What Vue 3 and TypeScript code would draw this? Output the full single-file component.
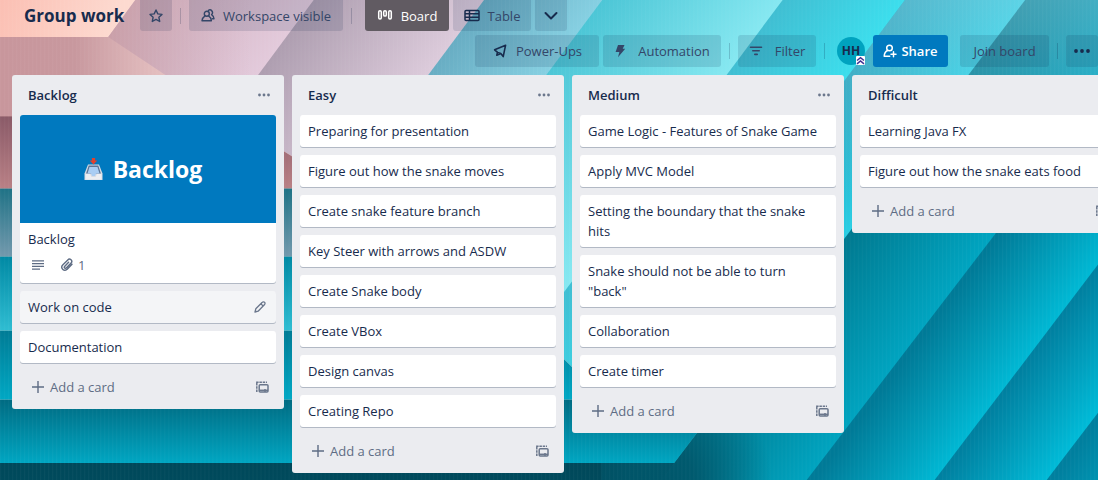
<script setup lang="ts">
interface Card {
  title: string
  cover?: string
  attachments?: number
  hovered?: boolean
}

interface List {
  name: string
  cards: Card[]
}

interface Fold {
  corner: [number, number]
  top: number
  flat: [string, string]
  slant: [string, string]
  wide?: boolean
}

const plain = (...titles: string[]): Card[] => titles.map((title) => ({ title }))

const lists: List[] = [
  {
    name: 'Backlog',
    cards: [
      { title: 'Backlog', cover: 'Backlog', attachments: 1 },
      { title: 'Work on code', hovered: true },
      { title: 'Documentation' },
    ],
  },
  {
    name: 'Easy',
    cards: plain(
      'Preparing for presentation',
      'Figure out how the snake moves',
      'Create snake feature branch',
      'Key Steer with arrows and ASDW',
      'Create Snake body',
      'Create VBox',
      'Design canvas',
      'Creating Repo',
    ),
  },
  {
    name: 'Medium',
    cards: plain(
      'Game Logic - Features of Snake Game',
      'Apply MVC Model',
      'Setting the boundary that the snake hits',
      'Snake should not be able to turn "back"',
      'Collaboration',
      'Create timer',
    ),
  },
  {
    name: 'Difficult',
    cards: plain('Learning Java FX', 'Figure out how the snake eats food'),
  },
]

// Sheets of folded paper: each runs flat from the left edge to its corner, then slants up to the top.
// The flat part of a wide sheet reaches all the way to the edge of the next sheet.
const folds: Fold[] = [
  { corner: [108, 37], top: 135, flat: ['#c4929a', '#d9a5a3'], slant: ['#ccaab8', '#e3cadb'] },
  { corner: [227, 116], top: 313, flat: ['#8a5a68', '#b98085'], slant: ['#ae9eb0', '#dccbdb'] },
  { corner: [343, 188], top: 483, flat: ['#1f7286', '#7399ad'], slant: ['#68adc3', '#86d0e2'] },
  { corner: [410, 256], top: 601, flat: ['#0089a4', '#2fbdd2'], slant: ['#4cc6d6', '#86e8f1'] },
  { corner: [534, 330], top: 781, flat: ['#007b95', '#00a8c4'], slant: ['#40bed2', '#3cdeed'] },
  { corner: [604, 399], top: 903, flat: ['#006b82', '#00a6c2'], slant: ['#1f9fba', '#2acfe4'], wide: true },
  { corner: [673, 462], top: 1023, flat: ['#00485a', '#005f70'], slant: ['#007990', '#00a6c2'] },
  { corner: [674, 650], top: 1172, flat: ['#006c82', '#006c82'], slant: ['#007a97', '#00bad6'] },
  { corner: [803, 650], top: 1296, flat: ['#006c82', '#006c82'], slant: ['#0080a0', '#00bedb'] },
  { corner: [914, 650], top: 1410, flat: ['#006c82', '#006c82'], slant: ['#007f9e', '#00b4d0'] },
]

const sheets = folds.map((fold, i) => {
  const next = folds[i + 1] ?? { corner: [1000, 760], top: 1530 }
  const [x, y] = fold.corner
  const width = next.top - fold.top
  // A flat part that leaves the picture keeps the line of its own slant.
  const innerX = next.corner[1] > 480 ? x - (next.corner[1] - y) * 0.75 : next.corner[0]
  const outerX = fold.wide ? next.corner[0] + (next.corner[1] - y) * 0.75 : x
  return {
    ...fold,
    id: i,
    y1: y,
    y2: next.corner[1],
    x2: fold.top + width * 0.64,
    d2: width * 0.48,
    flatPoints: `0,${y} ${outerX},${y} ${innerX},${next.corner[1]} 0,${next.corner[1]}`,
    slantPoints: `${x},${y} ${fold.top},0 1700,0 1700,760 ${innerX},${next.corner[1]}`,
  }
})
</script>

<template>
  <div class="page">
    <svg class="wallpaper" viewBox="0 0 1098 480" preserveAspectRatio="xMinYMin slice" aria-hidden="true">
      <defs>
        <template v-for="s in sheets" :key="s.id">
          <linearGradient :id="`flat${s.id}`" gradientUnits="userSpaceOnUse" x1="0" :y1="s.y1" x2="0" :y2="s.y2">
            <stop offset="0" :stop-color="s.flat[0]" />
            <stop offset="1" :stop-color="s.flat[1]" />
          </linearGradient>
          <linearGradient :id="`slant${s.id}`" gradientUnits="userSpaceOnUse" :x1="s.top" y1="0" :x2="s.x2" :y2="s.d2">
            <stop offset="0" :stop-color="s.slant[0]" />
            <stop offset="1" :stop-color="s.slant[1]" />
          </linearGradient>
        </template>
        <linearGradient id="peach" gradientUnits="userSpaceOnUse" x1="0" y1="0" x2="110" y2="40">
          <stop offset="0" stop-color="#fbbfb3" />
          <stop offset="1" stop-color="#fddad0" />
        </linearGradient>
        <linearGradient id="blush" gradientUnits="userSpaceOnUse" x1="0" y1="0" x2="250" y2="0">
          <stop offset="0" stop-color="#c8969c" />
          <stop offset="0.3" stop-color="#c8989e" />
          <stop offset="1" stop-color="#d0b0c0" stop-opacity="0" />
        </linearGradient>
        <linearGradient id="glow" x1="0" y1="0" x2="0" y2="1">
          <stop offset="0" stop-color="#a8dcea" stop-opacity="0.4" />
          <stop offset="1" stop-color="#a8dcea" stop-opacity="0" />
        </linearGradient>
        <radialGradient id="shade" gradientUnits="userSpaceOnUse" cx="660" cy="480" r="110">
          <stop offset="0" stop-color="#00566a" />
          <stop offset="0.3" stop-color="#00566a" stop-opacity="0.9" />
          <stop offset="1" stop-color="#00566a" stop-opacity="0" />
        </radialGradient>
        <pattern id="weave" width="4" height="4" patternUnits="userSpaceOnUse">
          <rect width="1" height="4" fill="#fff" fill-opacity="0.03" />
        </pattern>
      </defs>
      <rect width="1098" height="480" fill="url(#peach)" />
      <g v-for="s in sheets" :key="s.id">
        <polygon :points="s.slantPoints" :fill="`url(#slant${s.id})`" />
        <polygon v-if="s.id > 0" :points="s.flatPoints" :fill="`url(#flat${s.id})`" />
        <polygon v-else points="0,37 108,37 135,0 313,0 227,116 0,116" fill="url(#blush)" />
      </g>
      <polygon points="903,0 1098,0 1098,200 753,200" fill="url(#glow)" />
      <polygon points="600,462 673,462 790,306 790,480 600,480" fill="url(#shade)" />
      <rect width="1098" height="480" fill="url(#weave)" />
    </svg>

    <header class="header">
      <div class="row">
        <h1 class="title">Group work</h1>
        <button class="btn square star" type="button" aria-label="Star board">
          <svg width="14" height="14" viewBox="0 0 14 14" fill="none" stroke="currentColor" stroke-width="1.4" stroke-linejoin="round">
            <path d="M7 1l1.8 3.9 4.2.5-3.1 2.9.8 4.2L7 10.4l-3.7 2.1.8-4.2L1 5.400l4.200-.5z" />
          </svg>
        </button>
        <span class="rule" />
        <button class="btn visibility" type="button">
          <svg width="14" height="14" viewBox="0 0 14 14" fill="none" stroke="currentColor" stroke-width="1.400" stroke-linejoin="round" stroke-linecap="round">
            <circle cx="5.800" cy="4.800" r="2.500" />
            <path d="M4 6.800C2.200 8 1.200 9.400 1 11.800h9.400C10.200 9.400 9.400 8 7.600 6.800" />
            <path d="M7.400 1.300a2.700 2.700 0 0 1 3.200 4.300c1.400 1 2.200 2.200 2.400 4.200h-1.500" />
          </svg>
          Workspace visible
        </button>
        <span class="rule" />
        <button class="btn view active" type="button">
          <svg width="16" height="14" viewBox="0 0 16 14" fill="none" stroke="currentColor" stroke-width="1.500">
            <rect x="1.700" y="1.700" width="2.600" height="8.300" rx="1.200" />
            <rect x="6.700" y="1.700" width="2.600" height="5.400" rx="1.200" />
            <rect x="11.700" y="1.700" width="2.600" height="8.300" rx="1.200" />
          </svg>
          Board
        </button>
        <button class="btn view table" type="button">
          <svg width="16" height="14" viewBox="0 0 16 14" fill="none" stroke="currentColor" stroke-width="1.500">
            <rect x="1" y="1.500" width="14" height="10" rx="1" />
            <path d="M1 4.800h14M1 8.200h14M5.500 2v9.500" />
          </svg>
          Table
        </button>
        <button class="btn square more-views" type="button" aria-label="More views">
          <svg width="16" height="10" viewBox="0 0 16 10" fill="none" stroke="#172b4d" stroke-width="2" stroke-linecap="round" stroke-linejoin="round">
            <path d="M2.500 2l5.500 5.500L13.500 2" />
          </svg>
        </button>
      </div>

      <div class="row tools">
        <button class="btn power" type="button">
          <svg width="16" height="16" viewBox="0 0 16 16" fill="none" stroke="#172b4d" stroke-width="1.600" stroke-linejoin="round" stroke-linecap="round">
            <path d="M13.600 2.200L2.600 6.800l3 2.600 3.200 1.200 2.400 3zM5.400 9.600l-.6 2.600 3.400-1.500" />
          </svg>
          Power-Ups
        </button>
        <button class="btn automation" type="button">
          <svg width="12" height="14" viewBox="0 0 12 14" fill="currentColor">
            <path d="M4 1h6.500L8.700 4.800h2.500L4 13.300l1.400-5.200H1.600z" />
          </svg>
          Automation
        </button>
        <span class="rule" />
        <button class="btn filter" type="button">
          <svg width="14" height="12" viewBox="0 0 14 12" fill="none" stroke="currentColor" stroke-width="1.600" stroke-linecap="round">
            <path d="M1.500 2.200h11M3.800 5.800h6.400M5.800 9.400h2.400" />
          </svg>
          Filter
        </button>
        <span class="rule" />
        <button class="avatar" type="button" aria-label="HH, board admin">
          HH
          <svg class="badge" width="9" height="9" viewBox="0 0 9 9" fill="none" stroke="#403294" stroke-width="1.500">
            <rect width="9" height="9" rx="1" fill="#fff" stroke="none" />
            <path d="M1 4.500l3.500-2.800L8 4.500M1 7.800L4.500 5 8 7.800" />
          </svg>
        </button>
        <button class="btn share" type="button">
          <svg width="14" height="14" viewBox="0 0 14 14" fill="none" stroke="currentColor" stroke-width="1.500" stroke-linecap="round" stroke-linejoin="round">
            <circle cx="6.500" cy="4" r="2.800" />
            <path d="M4.500 6.500C2.500 7.500 1.300 9.500 1.200 12.200h5.500M10.500 7.800v5M8 10.300h5" />
          </svg>
          Share
        </button>
        <button class="btn join" type="button">Join board</button>
        <span class="rule" />
        <button class="btn square" type="button" aria-label="Show menu">
          <svg width="16" height="4" viewBox="0 0 16 4" fill="#172b4d">
            <circle cx="2" cy="2" r="1.900" /><circle cx="8" cy="2" r="1.900" /><circle cx="14" cy="2" r="1.900" />
          </svg>
        </button>
      </div>
    </header>

    <main class="board">
      <section v-for="list in lists" :key="list.name" class="list">
        <div class="list-head">
          <h2>{{ list.name }}</h2>
          <button class="icon-btn" type="button" :aria-label="`${list.name} list actions`">
            <svg width="12" height="4" viewBox="0 0 12 4" fill="currentColor">
              <circle cx="1.500" cy="2" r="1.400" /><circle cx="6" cy="2" r="1.400" /><circle cx="10.500" cy="2" r="1.400" />
            </svg>
          </button>
        </div>
        <div class="cards">
          <a v-for="card in list.cards" :key="card.title" href="#" class="card" :class="{ hovered: card.hovered }">
            <span v-if="card.cover" class="cover">
              <svg width="19" height="24" viewBox="0 0 18 24" aria-hidden="true">
                <path d="M3.500 7.500h11L18 16.500V23H0v-6.500z" fill="#d7dce4" />
                <path d="M4.200 8.500h9.600l2.600 8H1.600z" fill="#5d7597" />
                <path d="M5 10h8l2 6.500h-3.500l-1 2.500h-3l-1-2.500H3z" fill="#a9cdf3" />
                <path d="M1 17h4.500l1.500 3h4l1.500-3H17v5.500H1z" fill="#eceef2" />
                <path d="M7.400 1h3.200v2.500h2.200L9 7.400 5.200 3.500h2.200z" fill="#e2412c" />
              </svg>
              {{ card.cover }}
            </span>
            <span class="card-body">
              <span class="card-title">{{ card.title }}</span>
              <svg v-if="card.hovered" class="pencil" width="12" height="12" viewBox="0 0 12 12" fill="none" stroke="currentColor" stroke-width="1.300" stroke-linejoin="round">
                <path d="M1 11l.8-3.200L8.300 1.300a1.400 1.400 0 0 1 2.300 2.200L4.100 10.200zM6.900 2.800l2.300 2.300" />
              </svg>
            </span>
            <span v-if="card.attachments" class="badges">
              <svg width="12" height="10" viewBox="0 0 12 10" fill="none" stroke="currentColor" stroke-width="1.200">
                <path d="M0 .8h12M0 3.600h12M0 6.400h12M0 9.200h8" />
              </svg>
              <span class="attachments">
                <svg width="14" height="14" viewBox="0 0 14 14" fill="none" stroke="currentColor" stroke-width="1.400" stroke-linecap="round">
                  <path d="M12 6.300L7.200 11.300a3 3 0 0 1-4.500-4.200L7.800 1.900a2.200 2.200 0 0 1 3.300 3.100L6.300 9.900a1.100 1.100 0 0 1-1.700-1.500l4-4.200" />
                </svg>
                {{ card.attachments }}
              </span>
            </span>
          </a>
        </div>
        <div class="list-foot">
          <button class="add" type="button">
            <svg width="12" height="12" viewBox="0 0 12 12" fill="none" stroke="currentColor" stroke-width="1.400">
              <path d="M6 0v12M0 6h12" />
            </svg>
            Add a card
          </button>
          <button class="icon-btn" type="button" aria-label="Create from template">
            <svg width="13" height="13" viewBox="0 0 13 13" fill="none" stroke="currentColor" stroke-width="1.500">
              <rect x="3.200" y="3.700" width="8.800" height="7.300" rx="1" />
              <path d="M3.200 9.300h8.800" />
              <path d="M8 9.500h2" stroke-width="2.500" />
              <path d="M.8 11V1.200" stroke-dasharray="2.500 .8" />
              <path d="M.1 1.200H11" stroke-dasharray="2.500 .8" />
            </svg>
          </button>
        </div>
      </section>
    </main>
  </div>
</template>

<style>
html,
body {
  margin: 0;
  height: 100%;
}

#app {
  height: 100%;
}
</style>

<style scoped>
.page {
  position: relative;
  isolation: isolate;
  min-height: 100%;
  overflow: hidden;
  font: 13px/20px "Open Sans", "Noto Sans", sans-serif;
  color: #172b4d;
}

.wallpaper {
  position: absolute;
  inset: 0;
  width: 100%;
  height: 100%;
  z-index: -1;
}

button {
  border: 0;
  margin: 0;
  padding: 0;
  background: none;
  font: inherit;
  color: inherit;
  cursor: pointer;
}

svg {
  flex: none;
}

.header {
  display: flex;
  flex-direction: column;
  gap: 4px;
}

.row {
  display: flex;
  align-items: center;
  height: 32px;
}

.row:first-child {
  height: 31px;
  padding-left: 24px;
}

.tools {
  justify-content: flex-end;
}

.title {
  margin: 0;
  width: 116px;
  font-size: 17px;
  line-height: 31px;
  font-weight: 700;
  white-space: nowrap;
}

.btn {
  display: flex;
  align-items: center;
  justify-content: center;
  gap: 8px;
  height: 100%;
  border-radius: 3px;
  background: rgba(9, 30, 66, 0.13);
  color: #344668;
  white-space: nowrap;
}

.row:first-child .btn {
  border-radius: 0 0 3px 3px;
}

.square {
  width: 32px;
}

.rule {
  width: 1px;
  height: 16px;
  margin: 0 8px;
  background: rgba(9, 30, 66, 0.2);
}

.visibility {
  width: 154px;
}

.view {
  width: 84px;
  margin-left: 5px;
}

.row:first-child .view.active {
  background: #615b62;
  color: #fff;
  font-weight: 500;
}

.view.table {
  width: 78px;
  margin-left: 4px;
}

.table svg {
  color: #172b4d;
}

.more-views,
.automation {
  margin-left: 4px;
}

.power {
  width: 124px;
}

.automation {
  width: 118px;
  gap: 12px;
}

.filter {
  width: 78px;
  gap: 12px;
}

.avatar {
  position: relative;
  width: 28px;
  height: 28px;
  margin: 0 8px 0 4px;
  border-radius: 50%;
  background: #00a3bf;
  font-size: 12px;
  font-weight: 700;
}

.badge {
  position: absolute;
  right: 0;
  bottom: 0;
}

.share {
  width: 75px;
  gap: 4px;
  background: #0079bf;
  color: #fff;
  font-weight: 600;
}

.join {
  width: 89px;
  margin-left: 12px;
}

.board {
  display: flex;
  align-items: flex-start;
  gap: 8px;
  padding: 8px 12px;
}

.list {
  flex: none;
  width: 272px;
  border-radius: 3px;
  background: #ebecf0;
}

.list-head {
  display: flex;
  align-items: center;
  justify-content: space-between;
  height: 40px;
  padding: 0 4px 0 16px;
}

.list-head h2 {
  margin: 0;
  font-size: 13px;
  font-weight: 600;
}

.icon-btn {
  display: grid;
  place-items: center;
  width: 32px;
  height: 28px;
  color: #6b778c;
}

.cards {
  display: flex;
  flex-direction: column;
  gap: 8px;
  padding: 0 8px;
}

.card {
  border-radius: 3px;
  background: #fff;
  box-shadow: 0 1px 0 rgba(9, 30, 66, 0.25);
  color: inherit;
  text-decoration: none;
  overflow: hidden;
}

.card.hovered {
  background: #f4f5f7;
}

.cover {
  display: flex;
  align-items: center;
  justify-content: center;
  gap: 10px;
  height: 108px;
  padding-right: 10px;
  background: #0079bf;
  color: #fff;
  font-size: 23px;
  font-weight: 700;
}

.card-body {
  display: flex;
  align-items: center;
  justify-content: space-between;
  padding: 6px 10px 6px 8px;
}

.pencil {
  color: #6b778c;
}

.badges {
  display: flex;
  align-items: center;
  gap: 16px;
  height: 20px;
  padding: 0 12px 8px;
  color: #5e6c84;
}

.attachments {
  display: flex;
  align-items: center;
  gap: 4px;
}

.list-foot {
  display: flex;
  justify-content: space-between;
  padding: 10px 6px 8px 20px;
}

.add {
  display: flex;
  align-items: center;
  gap: 6px;
  height: 28px;
  color: #5e6c84;
}
</style>
